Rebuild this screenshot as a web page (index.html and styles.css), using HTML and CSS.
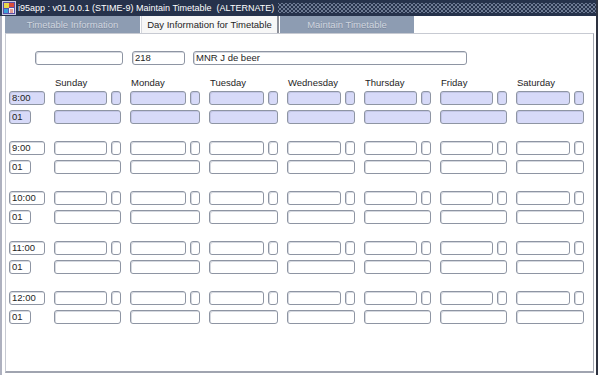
FILE: index.html
```html
<!DOCTYPE html>
<html>
<head>
<meta charset="utf-8">
<link rel="stylesheet" href="styles.css">
</head>
<body>
<div class="window">
  <div class="titlebar">
    <svg class="app-icon" width="14" height="14" viewBox="0 0 14 14">
      <rect x="0.5" y="0.5" width="13" height="13" fill="#5a4fa8" stroke="#c9c9e0"/>
      <rect x="2" y="2" width="5" height="5" fill="#e8d84a"/>
      <rect x="7" y="2" width="5" height="4" fill="#d84a3a"/>
      <rect x="2" y="8" width="4" height="4" fill="#3aa0d8"/>
      <rect x="7" y="7" width="5" height="5" fill="#f0f0f0"/>
      <path d="M8 9 L11 9 M8 11 L11 11" stroke="#d84a3a" stroke-width="1"/>
    </svg>
    <span class="title">i95app : v01.0.0.1 (STIME-9) Maintain Timetable&nbsp; (ALTERNATE)</span>
    <span class="dots"></span>
  </div>
  <div class="body">
    <div class="tabs">
      <div class="tab tab-1">Timetable Information</div>
      <div class="tab tab-2 active">Day Information for Timetable</div>
      <div class="tab tab-3">Maintain Timetable</div>
    </div>
    <div class="panel">
      <div class="head-row">
        <div class="field f-a"></div>
        <div class="field f-num">218</div>
        <div class="field f-name">MNR J de beer</div>
      </div>
      <div class="day-labels">
        <span></span>
        <span>Sunday</span><span>Monday</span><span>Tuesday</span><span>Wednesday</span><span>Thursday</span><span>Friday</span><span>Saturday</span>
      </div>

      <div class="block hl">
        <div class="field time">8:00</div>
        <div class="pair"><div class="field wide"></div><div class="field small"></div></div>
        <div class="pair"><div class="field wide"></div><div class="field small"></div></div>
        <div class="pair"><div class="field wide"></div><div class="field small"></div></div>
        <div class="pair"><div class="field wide"></div><div class="field small"></div></div>
        <div class="pair"><div class="field wide"></div><div class="field small"></div></div>
        <div class="pair"><div class="field wide"></div><div class="field small"></div></div>
        <div class="pair"><div class="field wide"></div><div class="field small"></div></div>
        <div class="field code">01</div>
        <div class="field long"></div><div class="field long"></div><div class="field long"></div><div class="field long"></div><div class="field long"></div><div class="field long"></div><div class="field long"></div>
      </div>

      <div class="block">
        <div class="field time">9:00</div>
        <div class="pair"><div class="field wide"></div><div class="field small"></div></div>
        <div class="pair"><div class="field wide"></div><div class="field small"></div></div>
        <div class="pair"><div class="field wide"></div><div class="field small"></div></div>
        <div class="pair"><div class="field wide"></div><div class="field small"></div></div>
        <div class="pair"><div class="field wide"></div><div class="field small"></div></div>
        <div class="pair"><div class="field wide"></div><div class="field small"></div></div>
        <div class="pair"><div class="field wide"></div><div class="field small"></div></div>
        <div class="field code">01</div>
        <div class="field long"></div><div class="field long"></div><div class="field long"></div><div class="field long"></div><div class="field long"></div><div class="field long"></div><div class="field long"></div>
      </div>

      <div class="block">
        <div class="field time">10:00</div>
        <div class="pair"><div class="field wide"></div><div class="field small"></div></div>
        <div class="pair"><div class="field wide"></div><div class="field small"></div></div>
        <div class="pair"><div class="field wide"></div><div class="field small"></div></div>
        <div class="pair"><div class="field wide"></div><div class="field small"></div></div>
        <div class="pair"><div class="field wide"></div><div class="field small"></div></div>
        <div class="pair"><div class="field wide"></div><div class="field small"></div></div>
        <div class="pair"><div class="field wide"></div><div class="field small"></div></div>
        <div class="field code">01</div>
        <div class="field long"></div><div class="field long"></div><div class="field long"></div><div class="field long"></div><div class="field long"></div><div class="field long"></div><div class="field long"></div>
      </div>

      <div class="block">
        <div class="field time">11:00</div>
        <div class="pair"><div class="field wide"></div><div class="field small"></div></div>
        <div class="pair"><div class="field wide"></div><div class="field small"></div></div>
        <div class="pair"><div class="field wide"></div><div class="field small"></div></div>
        <div class="pair"><div class="field wide"></div><div class="field small"></div></div>
        <div class="pair"><div class="field wide"></div><div class="field small"></div></div>
        <div class="pair"><div class="field wide"></div><div class="field small"></div></div>
        <div class="pair"><div class="field wide"></div><div class="field small"></div></div>
        <div class="field code">01</div>
        <div class="field long"></div><div class="field long"></div><div class="field long"></div><div class="field long"></div><div class="field long"></div><div class="field long"></div><div class="field long"></div>
      </div>

      <div class="block">
        <div class="field time">12:00</div>
        <div class="pair"><div class="field wide"></div><div class="field small"></div></div>
        <div class="pair"><div class="field wide"></div><div class="field small"></div></div>
        <div class="pair"><div class="field wide"></div><div class="field small"></div></div>
        <div class="pair"><div class="field wide"></div><div class="field small"></div></div>
        <div class="pair"><div class="field wide"></div><div class="field small"></div></div>
        <div class="pair"><div class="field wide"></div><div class="field small"></div></div>
        <div class="pair"><div class="field wide"></div><div class="field small"></div></div>
        <div class="field code">01</div>
        <div class="field long"></div><div class="field long"></div><div class="field long"></div><div class="field long"></div><div class="field long"></div><div class="field long"></div><div class="field long"></div>
      </div>
    </div>
  </div>
</div>
</body>
</html>
```
FILE: styles.css
```css
html, body {
  margin: 0;
  padding: 0;
  background: #ffffff;
}
body {
  font-family: "Liberation Sans", Arial, sans-serif;
  font-size: 9.5px;
  color: #1e1e1e;
}
.window {
  width: 598px;
  height: 375px;
  box-sizing: border-box;
  border-right: 2px solid #2e3340;
  display: flex;
  flex-direction: column;
  background: #ffffff;
}
.titlebar {
  height: 16px;
  flex: none;
  background: #26324b;
  display: flex;
  align-items: center;
  color: #ffffff;
  font-size: 9px;
  padding-left: 2px;
  box-sizing: border-box;
}
.app-icon {
  flex: none;
  margin-right: 2px;
}
.title {
  white-space: nowrap;
  line-height: 16px;
}
.dots {
  flex: 1;
  align-self: stretch;
  margin: 3px 0 3px 4px;
  background-color: #26324b;
  background-image:
    radial-gradient(circle, #6d7a93 0.75px, transparent 1px),
    radial-gradient(circle, #6d7a93 0.75px, transparent 1px);
  background-size: 4px 4px;
  background-position: 0 0, 2px 2px;
}
.body {
  flex: 1;
  display: flex;
  flex-direction: column;
  border-left: 2px solid #aeb1bf;
  padding: 0 2px 2px 3px;
  min-height: 0;
}
.tabs {
  height: 17px;
  flex: none;
  display: flex;
  gap: 1px;
}
.tab {
  box-sizing: border-box;
  height: 17px;
  line-height: 16px;
  text-align: center;
  background: #8d9cb2;
  color: #cfd5df;
  text-shadow: 0 1px 0 #7a879c;
  white-space: nowrap;
  padding-top: 1px;
}
.tab-1 { width: 135px; }
.tab-2 { width: 138px; }
.tab-3 { width: 134px; }
.tab.active {
  background: #f7f7f7;
  color: #1e1e1e;
  text-shadow: none;
  border-left: 1px solid #d4d6dc;
  border-right: 2px solid #8c8f98;
}
.panel {
  flex: 1;
  border: 1px solid #c7cad2;
  border-right-color: #a4a8b2;
  border-bottom: 2px solid #a0a4b0;
  padding: 17px 0 0 3px;
  box-sizing: border-box;
}
.field {
  box-sizing: border-box;
  height: 14px;
  line-height: 12px;
  border: 1px solid #8e95a3;
  border-radius: 3px;
  box-shadow: inset 1px 1px 0 #d6d9e0;
  background: #ffffff;
  padding-left: 2px;
  white-space: nowrap;
  overflow: hidden;
}
.hl .field {
  background: #d7daf8;
  box-shadow: inset 1px 1px 0 #c3c6e6;
}
.head-row {
  display: flex;
  margin-left: 26px;
}
.f-a { width: 88px; margin-right: 9px; }
.f-num { width: 53px; margin-right: 8px; }
.f-name { width: 274px; }
.day-labels,
.block {
  display: grid;
  grid-template-columns: 36px 67px 70px 69px 68px 67px 67px 68px;
  column-gap: 9px;
}
.day-labels {
  line-height: 12px;
  margin: 12px 0 2px;
}
.day-labels span {
  padding-left: 1px;
}
.block {
  row-gap: 5px;
  margin-bottom: 17px;
}
.pair {
  display: flex;
  gap: 4px;
}
.wide { flex: 1; }
.small { width: 10px; flex: none; padding: 0; }
.time { width: 36px; }
.code { width: 22px; }
.long { width: 100%; }
```
